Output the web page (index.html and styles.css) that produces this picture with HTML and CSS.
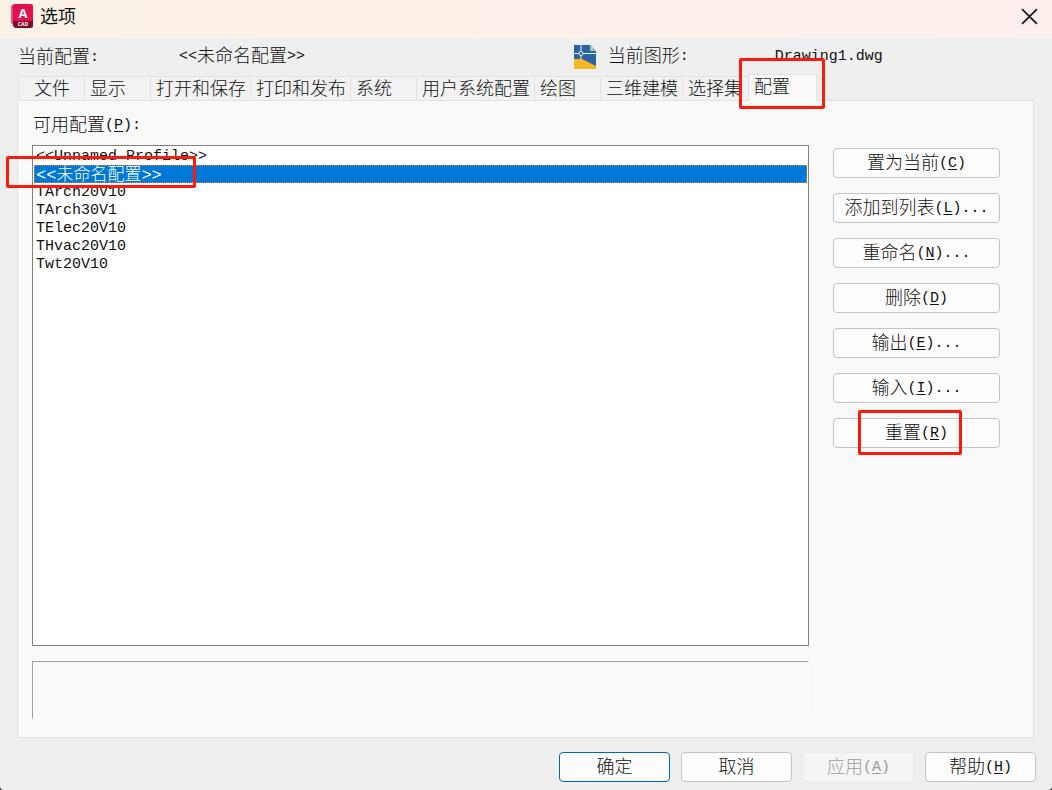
FILE: index.html
```html
<!DOCTYPE html>
<html lang="zh-CN">
<head>
<meta charset="UTF-8">
<meta name="viewport" content="width=device-width, initial-scale=1.0">
<title>选项</title>
<link rel="stylesheet" href="styles.css">
</head>
<body>

<div class="dialog">
    <header class="titlebar">
        <svg class="appIcon" viewBox="0 0 22 24" aria-hidden="true">
            <path d="M0 2 L3 0 V21 L0 19 Z" fill="#f04a78"/>
            <path d="M2 2 Q2 0 4 0 H20 Q22 0 22 2 V18 H2 Z" fill="#e3104f"/>
            <path d="M2 17 H22 V22 Q22 24 20 24 H4 L2 22 Z" fill="#7d0a2e"/>
            <text x="12" y="14" class="iconLetter">A</text>
            <text x="12" y="22" class="iconCaption">CAD</text>
        </svg>
        <h1>选项</h1>
        <button class="close" aria-label="关闭">
            <svg viewBox="0 0 16 16" aria-hidden="true"><path d="M1 1 L15 15 M15 1 L1 15" stroke="#111" stroke-width="1.5"/></svg>
        </button>
    </header>

    <div class="info">
        <span class="infoLabel">当前配置<span class="mono">:</span></span>
        <span><span class="mono">&lt;&lt;</span>未命名配置<span class="mono">&gt;&gt;</span></span>
        <svg class="dwgIcon" viewBox="0 0 22 24" aria-hidden="true">
            <path d="M0 0 H16 L22 6 V24 H0 Z" fill="#2b64a5"/>
            <path d="M16 0 L22 6 H16 Z" fill="#a9c6c6"/>
            <path d="M0 14 H8 L22 21 V24 H0 Z" fill="#f5b726"/>
            <path d="M0 8.5 H22 M7 0 V14" stroke="#e8f1fa" stroke-width="1"/>
            <circle cx="7" cy="8.5" r="2" fill="#2b64a5" stroke="#e8f1fa"/>
        </svg>
        <span>当前图形<span class="mono">:</span></span>
        <span><span class="mono">Drawing1.dwg</span></span>
    </div>

    <div class="tabs" role="tablist">
        <button class="tab first" role="tab">文件</button>
        <button class="tab" role="tab">显示</button>
        <button class="tab" role="tab">打开和保存</button>
        <button class="tab" role="tab">打印和发布</button>
        <button class="tab" role="tab">系统</button>
        <button class="tab" role="tab">用户系统配置</button>
        <button class="tab" role="tab">绘图</button>
        <button class="tab" role="tab">三维建模</button>
        <button class="tab" role="tab">选择集</button>
        <button class="tab active" role="tab" aria-selected="true">配置<span class="mark markTab"></span></button>
    </div>

    <main class="panel">
        <label class="listLabel" for="profiles">可用配置<span class="mono">(<u>P</u>):</span></label>
        <div class="columns">
            <div class="listBox">
                <select id="profiles" class="profiles" size="20">
                    <option>&lt;&lt;Unnamed Profile&gt;&gt;</option>
                    <option class="current" selected>&lt;&lt;未命名配置&gt;&gt;</option>
                    <option>TArch20V10</option>
                    <option>TArch30V1</option>
                    <option>TElec20V10</option>
                    <option>THvac20V10</option>
                    <option>Twt20V10</option>
                </select>
                <span class="mark markRow"></span>
            </div>
            <div class="actions">
                <button class="btn">置为当前<span class="mono">(<u>C</u>)</span></button>
                <button class="btn">添加到列表<span class="mono">(<u>L</u>)...</span></button>
                <button class="btn">重命名<span class="mono">(<u>N</u>)...</span></button>
                <button class="btn">删除<span class="mono">(<u>D</u>)</span></button>
                <button class="btn">输出<span class="mono">(<u>E</u>)...</span></button>
                <button class="btn">输入<span class="mono">(<u>I</u>)...</span></button>
                <button class="btn">重置<span class="mono">(<u>R</u>)</span><span class="mark markReset"></span></button>
            </div>
            <div class="description"></div>
        </div>
    </main>

    <footer class="footer">
        <button class="btn default">确定</button>
        <button class="btn">取消</button>
        <button class="btn" disabled>应用<span class="mono">(<u>A</u>)</span></button>
        <button class="btn">帮助<span class="mono">(<u>H</u>)</span></button>
    </footer>
</div>

</body>
</html>
```
FILE: styles.css
```css
* {
    box-sizing: border-box;
}
body {
    margin: 0;
    background: #333;
    font-family: "Noto Sans CJK SC", sans-serif;
    font-size: 18px;
    font-weight: 300;
    line-height: 24px;
    color: #111;
}
button, select {
    font: inherit;
    color: inherit;
}
/* latin glyphs are half the width of a chinese one */
.mono {
    font-family: "Liberation Mono", monospace;
    font-size: 15px;
    font-weight: 400;
    line-height: 1;
    vertical-align: 2px;
}
u {
    text-underline-offset: 2px;
}
.dialog {
    display: flex;
    flex-direction: column;
    min-height: 100vh;
    background: #efefef;
    border-radius: 0 0 4px 4px;
}

.titlebar {
    display: flex;
    align-items: center;
    height: 38px;
    padding: 0 14px 6px 11px;
    background: linear-gradient(to right, #faf1e7, #fbf0ec);
}
.titlebar h1 {
    margin: 0 auto 0 7px;
    padding-bottom: 2px;
    font-size: 18px;
    font-weight: 400;
}
.appIcon {
    width: 22px;
    height: 24px;
}
.iconLetter, .iconCaption {
    font-family: "Open Sans", sans-serif;
    font-weight: 700;
    text-anchor: middle;
    fill: #fff;
}
.iconLetter {
    font-size: 13px;
}
.iconCaption {
    font-size: 5px;
}
.close {
    display: flex;
    padding: 0;
    border: 0;
    background: none;
}
.close svg {
    width: 17px;
    height: 17px;
}

.info {
    display: grid;
    grid-template-columns: 161px 10fr 34px 167px 7fr;
    align-items: center;
    height: 36px;
    padding: 0 1px 6px 18px;
}
.infoLabel {
    padding-top: 2px;
}
.dwgIcon {
    width: 22px;
    height: 24px;
    margin-top: 7px;
}

.tabs {
    display: flex;
    align-items: flex-end;
    height: 27px;
    padding-left: 18px;
}
.tab {
    min-width: 66px;
    height: 25px;
    padding: 0 4px 4px 5px;
    border: 1px solid #e2e2e2;
    border-width: 1px 0 0 1px;
    background: #f2f2f2;
    text-align: left;
    line-height: 20px;
    white-space: nowrap;
}
.tab.first {
    padding-left: 15px;
}
.tab.active {
    position: relative;
    z-index: 1;
    min-width: 69px;
    height: 27px;
    padding-bottom: 8px;
    border-width: 1px 1px 0;
    background: #f9f9f9;
}

.panel {
    display: flex;
    flex: 1;
    flex-direction: column;
    margin: -1px 18px 0 17px;
    padding: 10px 33px 18px 14px;
    border: 1px solid #e2e2e2;
    background: #f9f9f9;
}
.listLabel {
    padding-left: 1px;
    margin-bottom: 10px;
    line-height: 24px;
}
.columns {
    display: grid;
    flex: 1;
    grid-template-columns: 1fr 167px;
    grid-template-rows: 1fr 58px;
    gap: 15px 24px;
}
.listBox {
    position: relative;
    display: flex;
}
.profiles {
    flex: 1;
    padding: 1px;
    border: 1px solid #828282;
    border-radius: 0;
    outline: 0;
    background: #fff;
    font-family: "Liberation Mono", "Noto Sans CJK SC", monospace;
    font-size: 15px;
    font-weight: 400;
    overflow: hidden;
}
.profiles option {
    display: flex;
    align-items: center;
    height: 18px;
    min-height: 18px;
    padding: 0 2px;
    line-height: 18px;
}
.profiles .current {
    padding-bottom: 4px;
    font-size: 17px;
    font-weight: 300;
}
.profiles option:checked {
    background: linear-gradient(#0078d7, #0078d7);
    outline: 1px dotted #d08a3c;
    outline-offset: -1px;
    -webkit-text-fill-color: #fff;
}
.actions {
    display: flex;
    flex-direction: column;
    gap: 15px;
    padding-top: 3px;
}
.description {
    border: 1px solid;
    border-color: #a0a0a0 #fff #fff #a0a0a0;
}

.btn {
    position: relative;
    height: 30px;
    padding: 0 0 4px;
    border: 1px solid #c4c4c4;
    border-radius: 4px;
    background: #fdfdfd;
    line-height: 24px;
    white-space: nowrap;
}
.btn.default {
    border-color: #0067c0;
}
.btn:disabled {
    border-color: #eaeaea;
    background: #f5f5f5;
    color: #9d9d9d;
}
.footer {
    display: flex;
    justify-content: flex-end;
    gap: 11px;
    padding: 14px 16px 8px;
}
.footer .btn {
    width: 111px;
}

/* red callout frames */
.mark {
    position: absolute;
    border: 3px solid #fb1a0c;
    border-radius: 2px;
    pointer-events: none;
}
.markTab {
    inset: -17px -9px -8px -10px;
}
.markRow {
    top: 11px;
    left: -26px;
    width: 190px;
    height: 32px;
}
.markReset {
    inset: -9px 37px -8px 24px;
}
```
